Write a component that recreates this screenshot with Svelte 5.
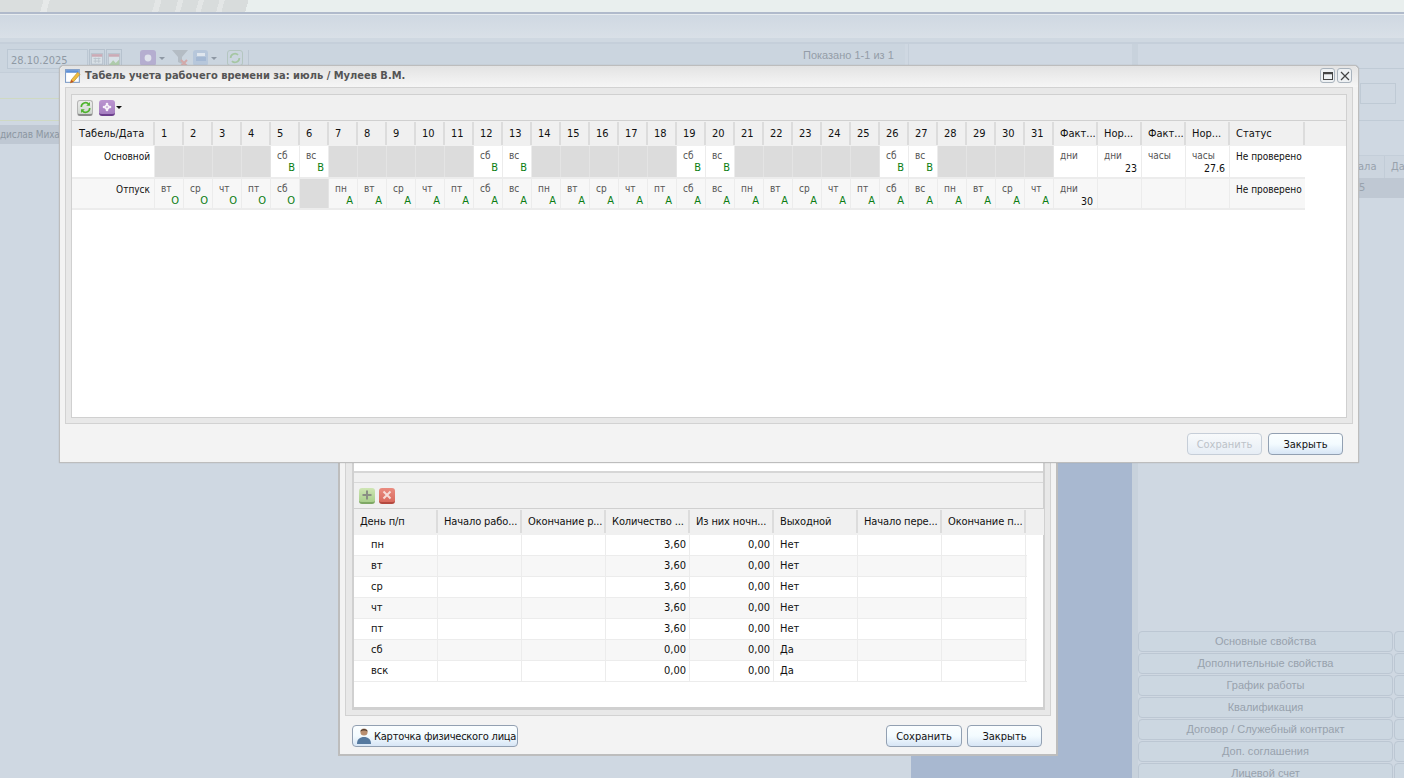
<script>
  const wd1 = ['','','','','сб','вс','','','','','','сб','вс','','','','','','сб','вс','','','','','','сб','вс','','','',''];
  const wd2 = ['вт','ср','чт','пт','сб','','пн','вт','ср','чт','пт','сб','вс','пн','вт','ср','чт','пт','сб','вс','пн','вт','ср','чт','пт','сб','вс','пн','вт','ср','чт'];
  const days = wd2.map((_, i) => i + 1);
  const tails = ['Факт...', 'Нор...', 'Факт...', 'Нор...'];
  const row1Tail = [['дни',''],['дни','23'],['часы',''],['часы','27.6']];
  const row2Tail = [['дни','30'],['',''],['',''],['','']];
  const sched = [['пн','3,60','0,00','Нет'],['вт','3,60','0,00','Нет'],['ср','3,60','0,00','Нет'],['чт','3,60','0,00','Нет'],['пт','3,60','0,00','Нет'],['сб','0,00','0,00','Да'],['вск','0,00','0,00','Да']];
  const schedHead = ['День п/п','Начало рабо...','Окончание р...','Количество ...','Из них ночн...','Выходной','Начало пере...','Окончание п...'];
  const tabs = ['Основные свойства','Дополнительные свойства','График работы','Квалификация','Договор / Служебный контракт','Доп. соглашения','Лицевой счет'];
</script>

<div class="desk">
  <div class="top"></div>
  <div class="nav"></div>
  <div class="band"></div>
  <div class="tools">
    <div class="date">28.10.2025</div>
    <span class="dimbtn"><svg viewBox="0 0 16 16" width="15" height="15"><rect x="1.500" y="2.500" width="13" height="12" fill="#d8e0e6" stroke="#b3bdc8"/><rect x="2" y="3" width="12" height="3" fill="#cbaab5"/><path d="M4 8h8M4 11h8M6 7v6M10 7v6" stroke="#b9c2cc"/></svg></span>
    <span class="dimbtn"><svg viewBox="0 0 16 16" width="15" height="15"><rect x="1.500" y="2.500" width="13" height="12" fill="#d8e0e6" stroke="#b3bdc8"/><rect x="2" y="3" width="12" height="3" fill="#cbaab5"/><path d="M2 16l5-6 3 3 4-4v7z" fill="#aecbaa"/></svg></span>
    <span class="dimgear"><svg viewBox="0 0 16 16" width="16" height="16"><circle cx="8" cy="8" r="3.400" fill="#dfe2ec"/></svg></span><i class="dimcaret"></i>
    <svg class="funnel" viewBox="0 0 18 18" width="18" height="18"><path d="M1 1h16l-6 7v7l-4-2V8z" fill="#b4bcc4"/><path d="M10 11l6 6M16 11l-6 6" stroke="#d3a8a8" stroke-width="2"/></svg>
    <span class="dimprint"><svg viewBox="0 0 16 16" width="16" height="16"><rect x="3" y="7" width="10" height="4" fill="#a5b9d4"/><rect x="4" y="3" width="8" height="3" fill="#dfe6ee"/></svg></span><i class="dimcaret"></i>
    <span class="dimrefresh"><svg viewBox="0 0 16 16" width="14" height="14"><path d="M3 8a5 5 0 0 1 8.500-3.500M13 8a5 5 0 0 1-8.500 3.500" fill="none" stroke="#a5c6a2" stroke-width="2"/></svg></span>
    <i class="sep"></i>
    <span class="shown">Показано 1-1 из 1</span>
  </div>
  <div class="ylw one"></div>
  <div class="ylw two"></div>
  <div class="personrow">дислав Миха</div>
  <div class="leftedge"></div>
  <div class="blue"></div>
  <div class="rightpanel">
    <div class="rbox"></div>
    <div class="rline l1"></div>
    <div class="rline l2"></div>
    <div class="rhead"><span>ала</span><span>Да</span></div>
    <div class="rrow"><span>5</span></div>
    <div class="rtabs">
      {#each tabs as t}<div class="rtabline"><div class="rtab">{t}</div><div class="rtab sliver"></div></div>{/each}
    </div>
  </div>
</div>

<section class="win back">
  <div class="backhead"></div>
  <div class="bpanel">
    <div class="bwhite">
      <div class="stub"></div>
      <div class="sep2"></div>
      <div class="tbar low">
        <span class="ib green"><svg viewBox="0 0 12 12" width="12" height="12"><path d="M6 1.500v9M1.500 6h9" stroke="#8a8f84" stroke-width="2"/></svg></span>
        <span class="ib red"><svg viewBox="0 0 12 12" width="12" height="12"><path d="M2.500 2.500l7 7M9.500 2.500l-7 7" stroke="#f6dcd8" stroke-width="2"/></svg></span>
      </div>
      <div class="sgrid">
        <div class="shead">{#each schedHead as h}<div class="sh">{h}</div>{/each}<div class="sfill"></div></div>
        {#each sched as r, i}
          <div class="srow" class:alt={i % 2 === 1}>
            <div class="sc day">{r[0]}</div><div class="sc"></div><div class="sc"></div>
            <div class="sc num">{r[1]}</div><div class="sc num">{r[2]}</div><div class="sc txt">{r[3]}</div><div class="sc"></div><div class="sc"></div>
          </div>
        {/each}
      </div>
    </div>
  </div>
  <div class="bfoot">
    <button class="btn card">
      <svg viewBox="0 0 16 18" width="16" height="18"><circle cx="8" cy="5" r="3.600" fill="#b98f70"/><path d="M4.400 4.600C4.600 1 11.400 1 11.600 4.600 10 3 6 3 4.400 4.600z" fill="#4d3a2c"/><path d="M1 17c0-5 3-7 7-7s7 2 7 7z" fill="#55799f"/></svg>
      <span>Карточка физического лица</span>
    </button>
    <span class="grow"></span>
    <button class="btn w76">Сохранить</button>
    <button class="btn w75">Закрыть</button>
  </div>
</section>

<section class="win front">
  <header class="ttl">
    <svg class="ticon" viewBox="0 0 16 16" width="17" height="17"><rect x="0.500" y="1.500" width="13" height="12" fill="#fff" stroke="#7e9cc6"/><rect x="1" y="2" width="12" height="2.500" fill="#5d8fd6"/><path d="M5 14l1-3 6-7 2 2-6 7z" fill="#f0bd3f" stroke="#b5872a" stroke-width=".6"/><path d="M5 14l1-3 2 2z" fill="#c04f2a"/></svg>
    <span class="ttxt">Табель учета рабочего времени за: июль / Мулеев В.М.</span>
    <span class="grow"></span>
    <span class="wbtn"><svg viewBox="0 0 12 12" width="12" height="12"><rect x="1.500" y="2.500" width="9" height="7" fill="none" stroke="#444"/><path d="M1.500 3.500h9" stroke="#444" stroke-width="1.500"/></svg></span>
    <span class="wbtn"><svg viewBox="0 0 12 12" width="12" height="12"><path d="M2 2l8 8M10 2l-8 8" stroke="#444" stroke-width="1.200"/></svg></span>
  </header>
  <div class="fpanel">
    <div class="fwhite">
      <div class="tbar">
        <span class="ib gray"><svg viewBox="0 0 14 14" width="13" height="13"><path d="M2.500 6.500A4.500 4.500 0 0 1 10.500 3.500M11.500 7.500A4.500 4.500 0 0 1 3.500 10.500" fill="none" stroke="#4fb32e" stroke-width="1.800"/><path d="M11.800 1v4h-4zM2.200 13V9h4z" fill="#4fb32e"/></svg></span>
        <span class="ib purple"><svg viewBox="0 0 14 14" width="14" height="14"><circle cx="7" cy="7" r="2.600" fill="#f7f2f9"/><circle cx="7" cy="4" r="1.300" fill="#f7f2f9"/><circle cx="7" cy="10" r="1.300" fill="#f7f2f9"/><circle cx="4" cy="7" r="1.300" fill="#f7f2f9"/><circle cx="10" cy="7" r="1.300" fill="#f7f2f9"/><circle cx="7" cy="7" r=".9" fill="#c3a5d4"/></svg></span>
        <i class="caret"></i>
      </div>
      <div class="tgrid">
        <div class="ghead">
          <div class="h first">Табель/Дата</div>
          {#each days as d}<div class="h day">{d}</div>{/each}
          {#each tails as t}<div class="h tail">{t}</div>{/each}
          <div class="h status">Статус</div>
          <div class="h fill"></div>
        </div>
        <div class="grow1">
          <div class="c label">Основной</div>
          {#each wd1 as w}
            {#if w}<div class="c dc"><span class="wd">{w}</span><b class="code">В</b></div>{:else}<div class="c dc off"></div>{/if}
          {/each}
          {#each row1Tail as t}<div class="c tc"><span class="wd">{t[0]}</span><span class="val">{t[1]}</span></div>{/each}
          <div class="c st">Не проверено</div>
        </div>
        <div class="grow1 alt">
          <div class="c label">Отпуск</div>
          {#each wd2 as w, i}
            {#if w}<div class="c dc"><span class="wd">{w}</span><b class="code">{i < 5 ? 'О' : 'А'}</b></div>{:else}<div class="c dc off"></div>{/if}
          {/each}
          {#each row2Tail as t}<div class="c tc"><span class="wd">{t[0]}</span><span class="val">{t[1]}</span></div>{/each}
          <div class="c st">Не проверено</div>
        </div>
      </div>
    </div>
  </div>
  <div class="ffoot">
    <button class="btn w75 dis">Сохранить</button>
    <button class="btn w75">Закрыть</button>
  </div>
</section>

<style>
  :global(body) { margin: 0; background: #cfd8e2; overflow: hidden; }
  * { box-sizing: border-box; }
  .desk { position: absolute; inset: 0; width: 1404px; height: 778px; overflow: hidden; background: #cfd8e2; font-family: "Liberation Sans", sans-serif; color: #99a2ad; font-size: 11px; }
  .top { height: 14px; border-bottom: 2px solid #b0bacb; background: linear-gradient(105deg, #dadede 0 42px, #e6e9e9 42px 48px, #dadede 48px 150px, #e3e6e6 150px 156px, #d8dcdc 156px 172px, #e3e6e6 172px 177px, #d8dcdc 177px 192px, #e3e6e6 192px 197px, #d8dcdc 197px 212px, #e3e6e6 212px 217px, #d8dcdc 217px 240px, #e9efee 240px); }
  .nav { height: 24px; background: linear-gradient(#cfd8e2, #d9e0e7); border-top: 1px solid #e7ecef; }
  .band { height: 6px; background: #cfd8e1; border-bottom: 2px solid #c5cfda; }
  .tools { position: absolute; left: 0; top: 44px; width: 905px; height: 28px; display: flex; align-items: center; padding-left: 7px; background: #cbd5df; }
  .date { width: 81px; height: 20px; border: 1px solid #bcc8d4; padding: 3px 0 0 3px; font: 11px "DejaVu Sans Condensed", "DejaVu Sans", sans-serif; line-height: 15px; color: #8f99a4; background: #ced8e2; margin-top: 2px; }
  .dimbtn { width: 16px; height: 19px; border: 1px solid #b6c2ce; margin-left: 1px; display: flex; align-items: center; justify-content: center; }
  .dimgear { width: 16px; height: 16px; border-radius: 3px; background: #b5aed0; margin-left: 18px; }
  .dimcaret { width: 0; height: 0; border: 3px solid transparent; border-top: 3px solid #8e98a4; border-bottom: 0; margin: 0 0 0 3px; }
  .funnel { margin-left: 6px; }
  .dimprint { width: 15px; height: 16px; border-radius: 3px; background: #b7c7db; margin-left: 4px; overflow: hidden; }
  .dimrefresh { width: 16px; height: 16px; border-radius: 3px; border: 1px solid #b4c6c0; margin-left: 10px; display: flex; align-items: center; justify-content: center; }
  .sep { width: 1px; height: 16px; background: #bcc7d2; margin-left: 5px; }
  .shown { position: absolute; left: 803px; top: 5px; font: 11px "Liberation Sans", sans-serif; color: #949da8; }
  .ylw { position: absolute; left: 0; width: 60px; height: 1px; background: #cfd9c2; }
  .ylw.one { top: 98px; } .ylw.two { top: 120px; }
  .personrow { position: absolute; left: 0; top: 125px; width: 60px; height: 19px; background: #bfc8d3; color: #8c97a2; font: 10px/19px "DejaVu Sans Condensed", "DejaVu Sans", sans-serif; letter-spacing: -.1px; white-space: nowrap; }
  .leftedge { position: absolute; left: 0; top: 72px; width: 60px; height: 1px; background: #c4ced9; }
  .blue { position: absolute; left: 911px; top: 462px; width: 221px; height: 316px; background: #a8b8d0; }
  .rightpanel { position: absolute; left: 1132px; top: 44px; width: 272px; height: 734px; border-left: 6px solid #c8d2dc; }
  .rightpanel::before { content: ""; position: absolute; left: -230px; top: 0; width: 1px; height: 28px; background: #c5cfda; }
  .rbox { position: absolute; left: 222px; top: 39px; width: 36px; height: 21px; border: 1px solid #bfcad5; }
  .rline { position: absolute; left: 220px; width: 46px; height: 1px; background: #c0cbd6; }
  .l1 { top: 24px; } .l2 { top: 76px; }
  .rhead { position: absolute; left: 220px; top: 111px; width: 46px; height: 23px; display: grid; grid-template-columns: 27px 19px; font: 11px "DejaVu Sans Condensed", "DejaVu Sans", sans-serif; line-height: 22px; color: #98a2ad; background: #ccd5df; border-top: 1px solid #c4ced9; }
  .rhead span:first-child { text-align: right; padding-right: 8px; border-right: 1px solid #c2ccd7; }
  .rhead span:last-child { padding-left: 6px; }
  .rrow { position: absolute; left: 220px; top: 134px; width: 46px; height: 20px; background: #bfc8d3; font: 11px/20px "DejaVu Sans Condensed", "DejaVu Sans", sans-serif; color: #98a2ad; padding-left: 1px; }
  .rtabs { position: absolute; left: 0; top: 587px; width: 266px; display: flex; flex-direction: column; gap: 1px; }
  .rtabline { display: flex; gap: 1px; }
  .rtab { flex: none; width: 255px; height: 21px; border: 1px solid #bcc7d3; border-radius: 4px; background: #ccd7e1; text-align: center; font: 11px/19px "Liberation Sans", sans-serif; color: #98a2ad; }
  .rtab.sliver { width: 20px; }

  .win { position: absolute; background: #f3f3f3; border: 1px solid #bdbdbd; font-family: "DejaVu Sans Condensed", "DejaVu Sans", sans-serif; font-size: 11px; color: #111; }
  .grow { flex: 1; }

  .back { left: 338px; top: 440px; width: 720px; height: 316px; border-width: 0 2px 2px 2px; }
  .backhead { height: 23px; }
  .bpanel { margin: 0 5px; height: 253px; background: #e8e8e8; border: 1px solid #d2d2d2; border-top: 0; padding: 0 5px 5px 7px; }
  .bwhite { height: 100%; background: #fff; border: solid #d0d0d0; border-width: 0 2px 3px 2px; margin-left: -1px; }
  .stub { height: 8px; background: #fff; }
  .sep2 { height: 12px; background: #f0f0f0; border-top: 2px solid #d6d6d6; border-bottom: 1px solid #d8d8d8; }
  .tbar { height: 26px; background: #f0f0f0; display: flex; align-items: center; padding-left: 5px; gap: 4px; border-bottom: 1px solid #d0d0d0; }
  .sgrid { width: 673px; }
  .shead { display: grid; grid-template-columns: repeat(8, 84px) 1fr; height: 26px; background: #f0f0f0; width: 690px; }
  .sh { padding-left: 6px; line-height: 23px; border-right: 2px solid #dcdcdc; margin-top: 1px; white-space: nowrap; overflow: hidden; height: 23px; color: #111; letter-spacing: -.12px; }
  .srow { display: grid; grid-template-columns: repeat(8, 84px); height: 21px; background: #fff; border-bottom: 1px solid #ececec; width: 673px; }
  .srow.alt { background: #f7f7f7; }
  .sc { border-right: 1px solid #ececec; line-height: 19px; padding: 0 3px; color: #111; }
  .sc.num { text-align: right; }
  .sc.day { padding-left: 17px; }
  .sc.txt { padding-left: 6px; }
  .bfoot { display: flex; align-items: center; height: 0; padding: 0 14px 0 12px; gap: 5px; margin-top: 20px; }

  .btn { height: 22px; border: 1px solid #92a0b2; border-radius: 4px; background: linear-gradient(#fbfeff 0, #f3fbff 50%, #d7e5f5 100%); font: 11px "DejaVu Sans Condensed", "DejaVu Sans", sans-serif; color: #111; padding: 0; }
  .w75 { width: 75px; }
  .w76 { width: 76px; }
  .dis { color: #bcc2c8; border-color: #c6ced8; background: linear-gradient(#f8fafb, #e6edf5); }
  .card { width: 166px; display: flex; align-items: center; gap: 2px; padding-left: 3px; white-space: nowrap; letter-spacing: -.24px; }
  .card svg { flex: none; }

  .front { left: 59px; top: 65px; width: 1300px; height: 398px; border-radius: 5px 5px 0 0; box-shadow: 0 0 1px #999; }
  .ttl { height: 21px; display: flex; align-items: center; padding: 0 6px 3px 5px; background: linear-gradient(#e3e3e3, #f6f6f6); border-radius: 5px 5px 0 0; }
  .ticon { margin-right: 3px; margin-top: 2px; flex: none; }
  .ttxt { font-weight: 700; font-size: 11px; color: #555; white-space: nowrap; }
  .wbtn { width: 15px; height: 15px; margin-left: 2px; margin-top: 1px; border: 1px solid #a9b3bd; border-radius: 3px; background: #eef1f3; display: flex; align-items: center; justify-content: center; }
  .fpanel { margin: 0 5px; height: 337px; background: #e8e8e8; border: 1px solid #d2d2d2; padding: 6px 5px 5px 5px; }
  .fwhite { height: 100%; background: #fff; border: 1px solid #d0d0d0; }
  .ib { width: 16px; height: 16px; border-radius: 3px; display: flex; align-items: center; justify-content: center; }
  .gray { background: linear-gradient(#ececec, #cfd6cf); border: 1px solid #b5b5b5; border-bottom: 2px solid #8b8b8b; }
  .purple { background: linear-gradient(#bb95d0, #a57ec0); border-bottom: 2px solid #6c3f8c; margin-left: 2px; }
  .green { background: linear-gradient(#cfe5b4, #a9cf8c); border-bottom: 2px solid #7fa865; }
  .red { background: linear-gradient(#ea8c80, #d96a5e); border-bottom: 2px solid #b4493f; }
  .caret { width: 0; height: 0; border: 3px solid transparent; border-top: 3px solid #111; border-bottom: 0; margin-left: -3px; }
  .grow1 { display: grid; grid-template-columns: 83px repeat(31, 29px) repeat(4, 44px) 75px; }
  .ghead { display: grid; grid-template-columns: 83px repeat(31, 29px) repeat(4, 44px) 75px 1fr; height: 25px; background: #f0f0f0; }
  .h { height: 23px; margin-top: 1px; line-height: 23px; border-right: 2px solid #dcdcdc; padding-left: 6px; white-space: nowrap; overflow: hidden; color: #111; }
  .h.first { padding-left: 7px; }
  .h.fill { border-right: 0; }
  .grow1 { height: 33px; width: 1233px; background: #fff; border-bottom: 2px solid #ececec; }
  .grow1.alt { height: 31px; background: #f7f7f7; }
  .c { border-right: 1px solid #ececec; position: relative; font-size: 10.500px; }
  .label { text-align: right; padding: 3px 4px 0 0; color: #111; line-height: 15px; font-size: 10px; }
  .dc.off { background: #dcdcdc; border-right-color: #e4e4e4; }
  .wd { position: absolute; left: 6px; top: 2px; color: #555; font-size: 10px; line-height: 15px; }
  .code { position: absolute; right: 4px; top: 15px; font-weight: 400; font-size: 11px; line-height: 14px; color: #0a7d12; }
  .val { position: absolute; right: 4px; top: 15px; line-height: 14px; color: #111; }
  .st { padding: 3px 0 0 6px; line-height: 15px; white-space: nowrap; color: #111; border-right: 0; font-size: 10px; }
  .ffoot { display: flex; justify-content: flex-end; gap: 6px; padding: 9px 15px 0 0; }
</style>
